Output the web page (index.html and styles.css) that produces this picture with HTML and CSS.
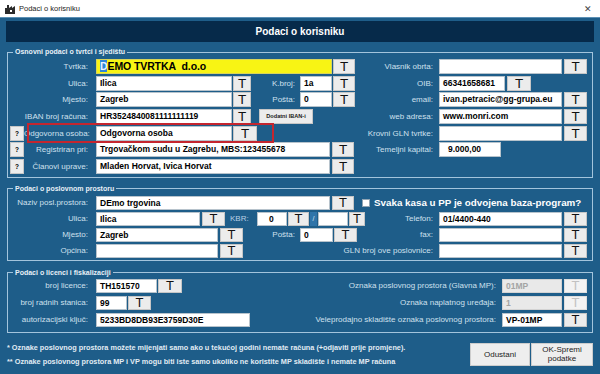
FILE: index.html
```html
<!DOCTYPE html>
<html lang="hr">
<head>
  <meta charset="UTF-8" />
  <title>Podaci o korisniku</title>
  <link rel="stylesheet" href="styles.css">
</head>
<body>
  <div class="titlebar">
    <svg class="app-icon" width="10" height="10" viewBox="0 0 10 10">
      <path d="M0 10V4h2V1h2v3l3-2v2l3-2v8z" fill="#2b2b2b"/>
      <rect x="5" y="6" width="2" height="2" fill="#fff"/>
    </svg>
    <span>Podaci o korisniku</span>
    <span class="close">&#x2715;</span>
  </div>

  <div class="window">
    <div class="banner">Podaci o korisniku</div>

    <!-- Osnovni podaci -->
    <fieldset class="group g1">
      <legend>Osnovni podaci o tvrtci i sjedištu</legend>
      <div class="row">
        <div class="left">
          <span class="lbl">Tvrtka:</span>
          <span class="f big yellow w236"><span class="sel">D</span>EMO TVRTKA&nbsp; d.o.o</span>
          <span class="t n1 w22">T</span>
        </div>
        <div class="right">
          <span class="rlbl">Vlasnik obrta:</span>
          <span class="f w123"></span>
          <span class="t w23">T</span>
        </div>
      </div>
      <div class="row">
        <div class="left">
          <span class="lbl">Ulica:</span>
          <span class="f w136">Ilica</span>
          <span class="t n1 w18">T</span>
          <span class="lbl-mid w44">K.broj:</span>
          <span class="f w32">1a</span>
          <span class="t n1 w22">T</span>
        </div>
        <div class="right">
          <span class="rlbl">OIB:</span>
          <span class="f w66">66341658681</span>
          <span class="t w24 oib">T</span>
        </div>
      </div>
      <div class="row">
        <div class="left">
          <span class="lbl">Mjesto:</span>
          <span class="f w136">Zagreb</span>
          <span class="t n1 w18">T</span>
          <span class="lbl-mid w44">Pošta:</span>
          <span class="f w32">0</span>
          <span class="t n1 w22">T</span>
        </div>
        <div class="right">
          <span class="rlbl">email:</span>
          <span class="f w123">ivan.petracic@gg-grupa.eu</span>
          <span class="t w23">T</span>
        </div>
      </div>
      <div class="row">
        <div class="left">
          <span class="lbl">IBAN broj računa:</span>
          <span class="f w136">HR3524840081111111119</span>
          <span class="t n1 w18">T</span>
          <span class="iban-btn">Dodatni IBAN-i</span>
        </div>
        <div class="right">
          <span class="rlbl">web adresa:</span>
          <span class="f w123">www.monri.com</span>
          <span class="t w23">T</span>
        </div>
      </div>
      <div class="row marked">
        <div class="left">
          <span class="q">?</span>
          <span class="lbl short">Odgovorna osoba:</span>
          <span class="f w136">Odgovorna osoba</span>
          <span class="t n1 w24">T</span>
        </div>
        <div class="right">
          <span class="rlbl">Krovni GLN tvrtke:</span>
          <span class="f w123"></span>
          <span class="t w23">T</span>
        </div>
        <div class="mark"></div>
      </div>
      <div class="row">
        <div class="left">
          <span class="q">?</span>
          <span class="lbl short">Registriran pri:</span>
          <span class="f w234">Trgovačkom sudu u Zagrebu, MBS:123455678</span>
          <span class="t w22">T</span>
        </div>
        <div class="right">
          <span class="rlbl">Temeljni kapital:</span>
          <span class="f w62 money">9.000,00</span>
        </div>
      </div>
      <div class="row">
        <div class="left">
          <span class="q">?</span>
          <span class="lbl short">Članovi uprave:</span>
          <span class="f w234">Mladen Horvat, Ivica Horvat</span>
          <span class="t w22">T</span>
        </div>
        <div class="right"></div>
      </div>
    </fieldset>

    <!-- Poslovni prostor -->
    <fieldset class="group g2">
      <legend>Podaci o poslovnom prostoru</legend>
      <div class="row">
        <span class="lbl">Naziv posl.prostora:</span>
        <span class="f w234">DEmo trgovina</span>
        <span class="t w22">T</span>
        <span class="chk"></span>
        <span class="chk-text">Svaka kasa u PP je odvojena baza-program?</span>
      </div>
      <div class="row">
        <div class="left">
          <span class="lbl">Ulica:</span>
          <span class="f w104">Ilica</span>
          <span class="t w23">T</span>
          <span class="kbr">KBR:</span>
          <span class="f w30 num">0</span>
          <span class="t n1 w21">T</span>
          <span class="slash">/</span>
          <span class="f n1 w30"></span>
          <span class="t n1 w16">T</span>
        </div>
        <div class="right">
          <span class="rlbl">Telefon:</span>
          <span class="f w123">01/4400-440</span>
          <span class="t w23">T</span>
        </div>
      </div>
      <div class="row">
        <div class="left">
          <span class="lbl">Mjesto:</span>
          <span class="f w122">Zagreb</span>
          <span class="t w23">T</span>
          <span class="lbl-mid w52">Pošta:</span>
          <span class="f w33">0</span>
          <span class="t n1 w23">T</span>
        </div>
        <div class="right">
          <span class="rlbl">fax:</span>
          <span class="f w123"></span>
          <span class="t w23">T</span>
        </div>
      </div>
      <div class="row">
        <div class="left">
          <span class="lbl">Općina:</span>
          <span class="f w122"></span>
          <span class="t w23">T</span>
        </div>
        <div class="right">
          <span class="rlbl">GLN broj ove poslovnice:</span>
          <span class="f w123"></span>
          <span class="t w23">T</span>
        </div>
      </div>
    </fieldset>

    <!-- Licenca i fiskalizacija -->
    <fieldset class="group g3">
      <legend>Podaci o licenci i fiskalizaciji</legend>
      <div class="row">
        <div class="left">
          <span class="lbl">broj licence:</span>
          <span class="f w61">TH151570</span>
          <span class="t n1 w24">T</span>
        </div>
        <div class="right">
          <span class="rlbl">Oznaka poslovnog prostora (Glavna MP):</span>
          <span class="f w60 off">01MP</span>
          <span class="t w23 off">T</span>
        </div>
      </div>
      <div class="row">
        <div class="left">
          <span class="lbl">broj radnih stanica:</span>
          <span class="f w31">99</span>
          <span class="t n1 w23">T</span>
        </div>
        <div class="right">
          <span class="rlbl">Oznaka naplatnog uređaja:</span>
          <span class="f w60 off">1</span>
          <span class="t w23 off">T</span>
        </div>
      </div>
      <div class="row">
        <div class="left">
          <span class="lbl">autorizacijski ključ:</span>
          <span class="f w154">5233BD8DB93E3759D30E</span>
        </div>
        <div class="right">
          <span class="rlbl">Veleprodajno skladište oznaka poslovnog prostora:</span>
          <span class="f w60">VP-01MP</span>
          <span class="t w23">T</span>
        </div>
      </div>
    </fieldset>

    <div class="footer">
      <div class="notes">
        <p>* Oznake poslovnog prostora možete mijenjati samo ako u tekućoj godini nemate računa (+odjaviti prije promjene).</p>
        <p>** Oznake poslovnog prostora MP i VP mogu biti iste samo ukoliko ne koristite MP skladište i nemate MP računa</p>
      </div>
      <button class="btn cancel">Odustani</button>
      <button class="btn ok">OK-Spremi<br>podatke</button>
    </div>
  </div>
</body>
</html>
```

FILE: styles.css
```css
:root {
  --blue: #1e5d89;
  --navy: #062a4a;
  --frame: #a3c4dc;
  --label: #cfe0ee;
  --btn: #ececec;
  --btn-border: #c6c6c6;
}

* {
  box-sizing: border-box;
  margin: 0;
  padding: 0;
}

body {
  width: 600px;
  height: 374px;
  overflow: hidden;
  background: var(--blue);
  font-family: "Liberation Sans", Arial, sans-serif;
  color: var(--label);
}

/* window title bar */
.titlebar {
  height: 18px;
  background: #fff;
  display: flex;
  align-items: center;
  padding: 0 8px 0 5px;
  color: #1b1b1b;
  font-size: 7.5px;
  border-bottom: 1px solid #5b8fb4;
}

.app-icon {
  margin-right: 4px;
}

.titlebar .close {
  margin-left: auto;
  font-size: 9px;
  color: #444;
}

.window {
  padding: 3px 7px 0;
}

.banner {
  height: 21px;
  margin: 0 -1px;
  background: var(--navy);
  color: #fff;
  font-weight: bold;
  font-size: 10px;
  display: flex;
  align-items: center;
  justify-content: center;
}

/* group boxes */
.group {
  border: 1px solid var(--frame);
  display: flex;
  flex-direction: column;
  min-width: 0;
}

.group legend {
  margin-left: 5px;
  padding: 0 2px;
  font-size: 7px;
  line-height: 8px;
  font-weight: bold;
  color: #e8f0f7;
}

.g1 {
  margin-top: 6px;
  padding: 3px 0 3px;
  gap: 1.67px;
}

.g2 {
  margin-top: 7px;
  padding: 3px 0 2px;
  gap: 2px;
}

.g3 {
  margin-top: 8px;
  padding: 2px 0 5px;
  gap: 3px;
}

.row {
  display: flex;
  height: 15px;
}

.g2 .row,
.g3 .row {
  height: 14px;
}

.left {
  width: 358px;
  flex: none;
  display: flex;
}

.right {
  flex: 1;
  min-width: 0;
  display: flex;
  justify-content: flex-end;
  padding-right: 5px;
}

.lbl,
.rlbl,
.lbl-mid,
.kbr {
  font-size: 8px;
  line-height: 15px;
  white-space: nowrap;
}

.g2 .lbl, .g2 .rlbl, .g2 .lbl-mid, .g2 .kbr,
.g3 .lbl, .g3 .rlbl {
  line-height: 14px;
}

.lbl {
  width: 80px;
  margin-right: 8px;
  text-align: right;
  flex: none;
}

.lbl.short {
  width: 64px;
}

.rlbl {
  flex: 1;
  min-width: 0;
  margin-right: 6px;
  display: flex;
  justify-content: flex-end;
}

.lbl-mid {
  text-align: right;
  margin-right: 5px;
  flex: none;
}

.kbr {
  width: 22px;
  margin: 0 5px;
  flex: none;
  color: #b9d0e4;
}

/* inputs */
.f {
  flex: none;
  background: #fff;
  border: 1px solid #b7c3cc;
  color: #000;
  font-weight: bold;
  font-size: 8.5px;
  line-height: 13px;
  padding: 0 3px;
  white-space: nowrap;
  overflow: hidden;
}

.g2 .f,
.g3 .f {
  line-height: 12px;
}

.f.big {
  font-size: 10.5px;
  letter-spacing: -0.1px;
}

.f.yellow {
  background: #f8f414;
  border-color: #d8d45a;
}

.sel {
  background: #2f86d6;
  color: #eaf3ff;
}

.f.money {
  padding-left: 8px;
  margin-right: 86px;
}

.f.num {
  padding-left: 11px;
}

.f.off {
  background: #e9e9e9;
  border-color: #d3d3d3;
  color: #a4a4a4;
}

/* T buttons */
.t {
  flex: none;
  margin-left: 2px;
  background: var(--btn);
  border: 1px solid var(--btn-border);
  color: #111;
  font-size: 13.5px;
  line-height: 13px;
  text-align: center;
}

.g2 .t,
.g3 .t {
  line-height: 12px;
  font-size: 13px;
}

.t.n1,
.f.n1 {
  margin-left: 1px;
}

.t.oib {
  margin-right: 56px;
}

.t.off {
  background: #f3f3f3;
  border-color: #dedede;
  color: #c2c2c2;
}

.q {
  flex: none;
  width: 14px;
  margin-left: 2px;
  background: var(--btn);
  border: 1px solid var(--btn-border);
  color: #000;
  font-size: 6.5px;
  font-weight: bold;
  line-height: 13px;
  text-align: center;
}

.iban-btn {
  flex: none;
  width: 54px;
  margin-left: 8px;
  background: var(--btn);
  border: 1px solid var(--btn-border);
  color: #1a1a1a;
  font-size: 5.6px;
  font-weight: bold;
  line-height: 13px;
  text-align: center;
  white-space: nowrap;
  overflow: hidden;
}

.slash {
  flex: none;
  width: 7px;
  margin-left: 1px;
  background: #2f74a9;
  color: #d6e6f3;
  font-size: 7px;
  line-height: 14px;
  text-align: center;
}

.chk {
  flex: none;
  align-self: center;
  width: 8px;
  height: 8px;
  margin: 0 4px 0 8px;
  background: #fff;
  border: 1px solid #8fa4b4;
}

.chk-text {
  color: #fff;
  font-weight: bold;
  font-size: 9.8px;
  line-height: 14px;
  white-space: nowrap;
}

/* highlighted row */
.marked {
  position: relative;
}

.mark {
  position: absolute;
  left: 19px;
  top: -3px;
  width: 247px;
  height: 20px;
  border: 2px solid #c4262f;
  pointer-events: none;
}

/* widths */
.w16 { width: 16px; }
.w18 { width: 18px; }
.w21 { width: 21px; }
.w22 { width: 22px; }
.w23 { width: 23px; }
.w24 { width: 24px; }
.w30 { width: 30px; }
.w31 { width: 31px; }
.w32 { width: 32px; }
.w33 { width: 33px; }
.w44 { width: 44px; }
.w52 { width: 52px; }
.w60 { width: 60px; }
.w61 { width: 61px; }
.w62 { width: 62px; }
.w66 { width: 66px; }
.w104 { width: 104px; }
.w122 { width: 122px; }
.w123 { width: 123px; }
.w136 { width: 136px; }
.w154 { width: 154px; }
.w234 { width: 234px; }
.w236 { width: 236px; }

/* footer */
.footer {
  display: flex;
  align-items: flex-start;
  margin-top: 8px;
}

.notes {
  flex: 1;
  min-width: 0;
  font-size: 7.3px;
  font-weight: bold;
  line-height: 14px;
  color: #e2ecf4;
  white-space: nowrap;
}

.btn {
  margin-top: 2px;
  height: 23px;
  flex: none;
  background: #eeeeee;
  border: 1px solid #cdcdcd;
  color: #222;
  font-family: inherit;
  font-size: 8px;
  line-height: 9px;
}

.btn.cancel {
  width: 60px;
}

.btn.ok {
  width: 62px;
  margin-left: 1px;
}
```
